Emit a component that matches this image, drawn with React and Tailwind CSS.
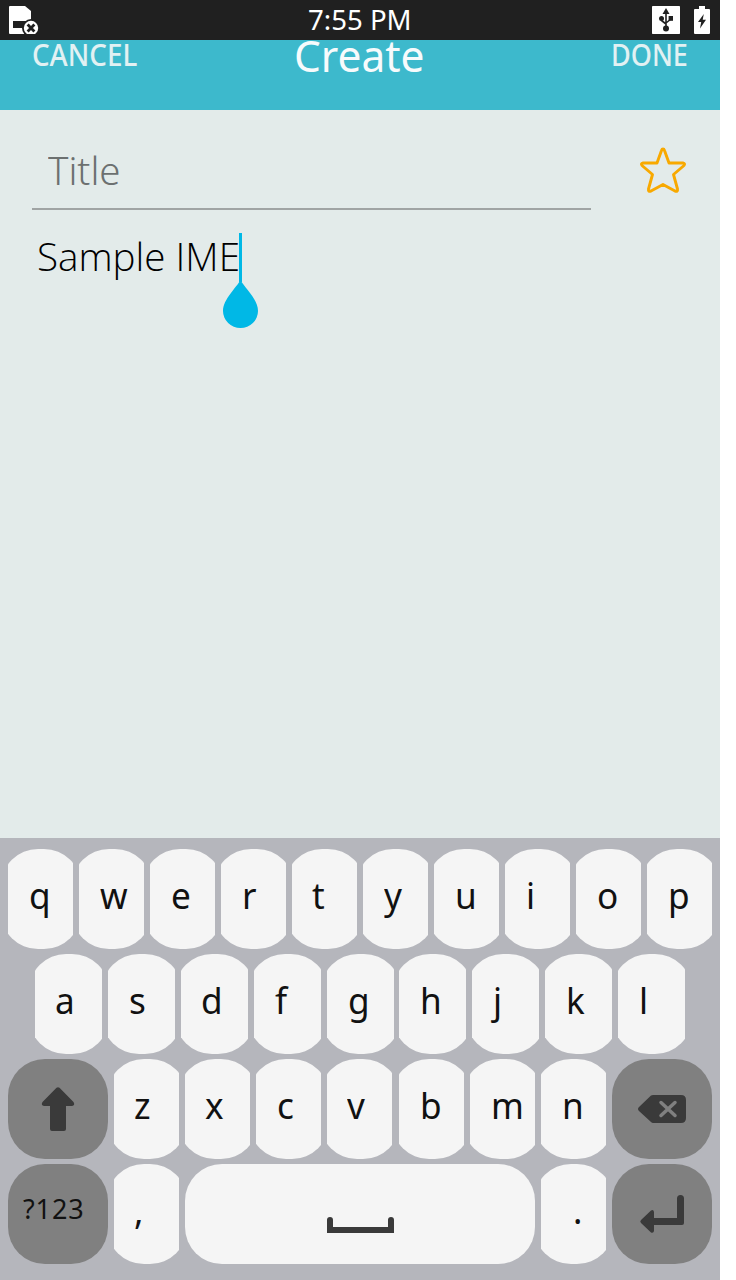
import React from "react";

function Key({ label, width = "w-[65px]", pad = "pl-[21px]", extra = "" }) {
  return (
    <div className={`flex h-[100px] shrink-0 justify-center overflow-hidden ${width} ${extra}`}>
      <div className="h-[100px] w-20 shrink-0 rounded-[37px] bg-[#f5f5f5]">
        <div className={`mx-auto ${width} ${pad} text-[37px] leading-[92px] font-[450] text-[#111111]`}>
          <span className="inline-block origin-left scale-x-[0.95]">{label}</span>
        </div>
      </div>
    </div>
  );
}

function DarkKey({ children }) {
  return <div className="h-[100px] w-[100px] shrink-0 rounded-[37px] bg-[#808080]">{children}</div>;
}

function StatusBar() {
  return (
    <div className="z-10 flex h-10 shrink-0 items-center justify-between bg-[#202020] pl-[9px] pr-[10px]">
      <svg className="h-7 w-[106px]" viewBox="0 0 106 28">
        <path d="M1 0H16L22 5V28H1Q0 28 0 27V1Q0 0 1 0Z" fill="#fff" />
        <path d="M4 15H22V22H4Z" fill="#202020" />
        <circle cx="22" cy="22" r="9" fill="#202020" />
        <circle cx="22" cy="22" r="7.2" fill="#fff" />
        <path d="M18.6 18.6L25.4 25.4M25.4 18.6L18.6 25.4" stroke="#202020" strokeWidth="2.8" />
      </svg>
      <div className="h-10 w-[104px] origin-left scale-x-[0.985] whitespace-nowrap text-[28px] leading-[39px] text-white">7:55 PM</div>
      <div className="flex w-[106px] items-start justify-end gap-[14px]">
        <svg className="h-7 w-7" viewBox="0 0 28 28">
          <rect width="28" height="28" rx="0.7" fill="#fff" />
          <g fill="#202020">
            <path d="M14 2L17.5 8H10.5Z" />
            <circle cx="14" cy="22.5" r="3" />
            <circle cx="9.5" cy="12.5" r="2.5" />
            <rect x="16.6" y="10" width="4.4" height="4.8" />
          </g>
          <path d="M14 6V22M9.5 12V14.5L14 18M19 13L14 17" fill="none" stroke="#202020" strokeWidth="1.6" />
        </svg>
        <svg className="h-7 w-4" viewBox="0 0 16 28">
          <path d="M5 0H11V3H15Q16 3 16 4V27Q16 28 15 28H1Q0 28 0 27V4Q0 3 1 3H5Z" fill="#fff" />
          <path d="M9.8 8L4 16H7.2L6 22.5L12 13.8H8.7Z" fill="#202020" />
        </svg>
      </div>
    </div>
  );
}

export default function App() {
  return (
    <div className="h-[1280px] w-[736px] overflow-hidden bg-white">
      <div className="flex h-[1280px] w-[720px] flex-col bg-[#e3ebea] font-['Noto_Sans',sans-serif]">
        <StatusBar />
        <header className="flex h-[70px] shrink-0 items-start bg-[#3db9cc] pl-8">
          <div className="h-[30px] w-[262px] leading-[30px]">
            <span className="inline-block origin-left scale-x-[0.925] text-[30px] font-medium text-[#e2f1f3]">CANCEL</span>
          </div>
          <div className="h-[30px] w-[317px] leading-[30px]">
            <span className="inline-block origin-left scale-x-[0.965] text-[44px] text-[#f7fbfc]">Create</span>
          </div>
          <div className="h-[30px] leading-[30px]">
            <span className="inline-block origin-left scale-x-[0.9] text-[30px] font-medium text-[#e2f1f3]">DONE</span>
          </div>
        </header>

        <main className="flex h-[728px] shrink-0 flex-col pl-8">
          <div className="flex">
            <div className="h-[100px] w-[559px] border-b-2 border-[#a0a4a4] pl-4 pt-[30px]">
              <span className="inline-block origin-left scale-x-[0.985] text-[39px] font-light leading-[60px] text-[#6c7070]">Title</span>
            </div>
            <svg className="ml-12 mt-[36px] h-[50px] w-[50px]" viewBox="0 0 50 50">
              <path d="M24 3Q23 3 22.5 4.5L18 17H4Q1.5 17.5 3 19.5L13.5 28.5L9.5 43Q9 46 12 45L24 38.5L36 45Q39 46 38.5 43L34.5 28.5L45 19.5Q46.5 17.5 44 17H30L25.5 4.5Q25 3 24 3Z" fill="none" stroke="#f8a900" strokeWidth="2.9" strokeLinejoin="round" />
            </svg>
          </div>
          <div className="flex pl-[5px] pt-[23px]">
            <div className="w-[202px] whitespace-nowrap font-['Open_Sans',sans-serif] text-[39px] font-light leading-[46px] text-black">
              <span className="inline-block origin-left scale-x-[0.99]">Sample IME</span>
            </div>
            <svg className="-ml-4 h-24 w-9" viewBox="0 0 36 96">
              <path d="M16 0H19V49H16Z" fill="#00b8e6" />
              <path d="M17.5 47C21 54 35 66 35 78A17.5 17 0 0 1 0 78C0 66 14 54 17.5 47Z" fill="#00b8e6" />
            </svg>
          </div>
        </main>

        <section className="flex h-[442px] shrink-0 flex-col gap-[5px] bg-[#b5b6bc] pl-2 pt-[11px]">
          <div className="flex gap-1.5">
            {["q", "w", "e", "r", "t", "y", "u", "i", "o", "p"].map((k) => (
              <Key key={k} label={k} pad={k === "t" ? "pl-5" : "pl-[21px]"} />
            ))}
          </div>
          <div className="flex gap-1.5 pl-[27px]">
            {["a", "s", "d", "f", "g", "h", "j", "k", "l"].map((k) => (
              <Key key={k} label={k} width="w-[67px]" pad={k === "a" || k === "d" ? "pl-5" : "pl-[21px]"} extra={k === "h" ? "-ml-px" : ""} />
            ))}
          </div>
          <div className="flex gap-1.5">
            <DarkKey>
              <svg className="h-full w-full" viewBox="0 0 100 100">
                <path d="M48.5 28.8Q50 27.5 51.5 28.8L65.5 43Q67.5 46 64 47H58V70Q58 72 56 72H44Q42 72 42 70V47H36Q32.5 46 34.5 43Z" fill="#3a3a3a" />
              </svg>
            </DarkKey>
            {["z", "x", "c", "v", "b", "m", "n"].map((k) => (
              <Key key={k} label={k} extra={k === "b" ? "ml-px" : ""} pad={k === "x" || k === "v" || k === "z" ? "pl-5" : "pl-[21px]"} />
            ))}
            <DarkKey>
              <svg className="h-full w-full" viewBox="0 0 100 100">
                <path d="M39 36.5Q40 36 41 36H69Q74 36 74 41V59Q74 64 69 64H41Q40 64 39 63L27 52Q25 50 27 48Z" fill="#3a3a3a" />
                <path d="M49 43.5L63 56.5M63 43.5L49 56.5" stroke="#808080" strokeWidth="3.5" strokeLinecap="round" />
              </svg>
            </DarkKey>
          </div>
          <div className="flex gap-1.5">
            <DarkKey>
              <div className="pl-[15px] text-[27px] leading-[89px] tracking-[0.9px] text-[#111111]">?123</div>
            </DarkKey>
            <Key label="," pad="pl-5" />
            <div className="h-[100px] w-[350px] rounded-[37px] bg-[#f5f5f5]">
              <svg className="h-full w-full" viewBox="0 0 350 100">
                <path d="M142 69V56Q142 53 145 53Q148 53 148 56V63H203V56Q203 53 206 53Q209 53 209 56V69Z" fill="#3a3a3a" />
              </svg>
            </div>
            <Key label="." pad="pl-[32px]" />
            <DarkKey>
              <svg className="h-full w-full" viewBox="0 0 100 100">
                <path d="M65 34.5Q65 31 68.5 31Q72 31 72 34.5V59Q72 61 70 61H42V67Q41.5 69.5 39 68.5L29 59Q27.5 57.5 29 56L39 46.5Q41.5 45 42 48V54H65Z" fill="#3a3a3a" />
              </svg>
            </DarkKey>
          </div>
        </section>
      </div>
    </div>
  );
}
